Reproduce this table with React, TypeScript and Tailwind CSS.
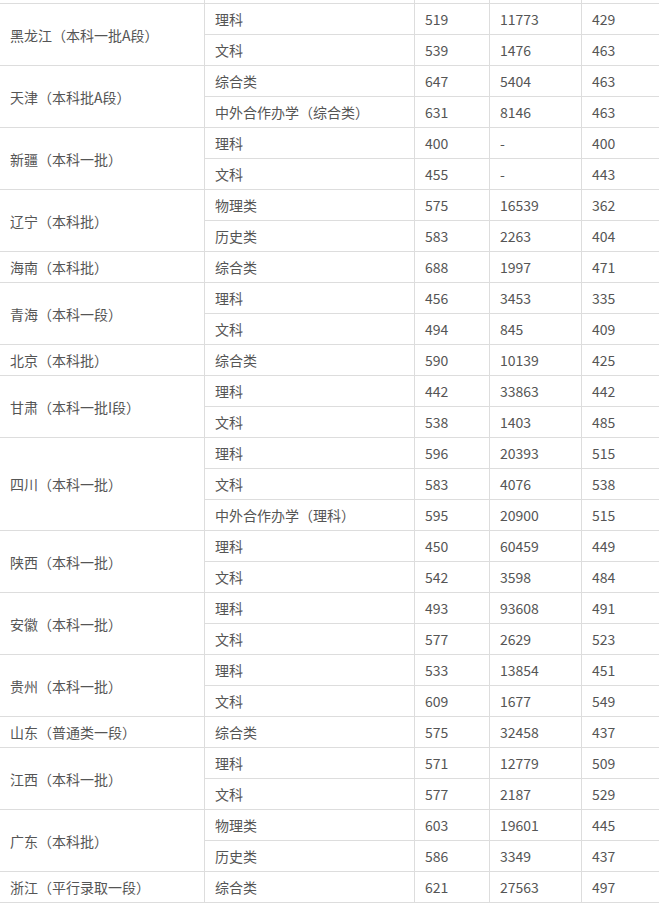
const groups: [string, [string, string, string, string][]][] = [
  ["黑龙江（本科一批A段）", [["理科", "519", "11773", "429"], ["文科", "539", "1476", "463"]]],
  ["天津（本科批A段）", [["综合类", "647", "5404", "463"], ["中外合作办学（综合类）", "631", "8146", "463"]]],
  ["新疆（本科一批）", [["理科", "400", "-", "400"], ["文科", "455", "-", "443"]]],
  ["辽宁（本科批）", [["物理类", "575", "16539", "362"], ["历史类", "583", "2263", "404"]]],
  ["海南（本科批）", [["综合类", "688", "1997", "471"]]],
  ["青海（本科一段）", [["理科", "456", "3453", "335"], ["文科", "494", "845", "409"]]],
  ["北京（本科批）", [["综合类", "590", "10139", "425"]]],
  ["甘肃（本科一批I段）", [["理科", "442", "33863", "442"], ["文科", "538", "1403", "485"]]],
  ["四川（本科一批）", [["理科", "596", "20393", "515"], ["文科", "583", "4076", "538"], ["中外合作办学（理科）", "595", "20900", "515"]]],
  ["陕西（本科一批）", [["理科", "450", "60459", "449"], ["文科", "542", "3598", "484"]]],
  ["安徽（本科一批）", [["理科", "493", "93608", "491"], ["文科", "577", "2629", "523"]]],
  ["贵州（本科一批）", [["理科", "533", "13854", "451"], ["文科", "609", "1677", "549"]]],
  ["山东（普通类一段）", [["综合类", "575", "32458", "437"]]],
  ["江西（本科一批）", [["理科", "571", "12779", "509"], ["文科", "577", "2187", "529"]]],
  ["广东（本科批）", [["物理类", "603", "19601", "445"], ["历史类", "586", "3349", "437"]]],
  ["浙江（平行录取一段）", [["综合类", "621", "27563", "497"]]],
];

const cell = "border border-[#ddd] px-[10px] py-0 align-middle text-left font-normal whitespace-nowrap";

export default function App() {
  return (
    <div className="w-[659px] h-[904px] overflow-hidden bg-white">
      <table
        className="ml-[-1px] mt-[-28px] border-collapse table-fixed w-[700px] text-[14px] leading-[20px] text-[#555]"
        style={{ fontFamily: '"Noto Sans CJK SC", "Noto Sans", sans-serif' }}
      >
        <colgroup>
          <col className="w-[205px]" />
          <col className="w-[210px]" />
          <col className="w-[75px]" />
          <col className="w-[92px]" />
          <col className="w-[118px]" />
        </colgroup>
        <tbody>
          <tr className="h-[31px]">
            <td className={cell}></td>
            <td className={cell}></td>
            <td className={cell}></td>
            <td className={cell}></td>
            <td className={cell}></td>
          </tr>
          {groups.map(([prov, rows]) =>
            rows.map((r, i) => (
              <tr key={prov + i} className="h-[31px]">
                {i === 0 && (
                  <td rowSpan={rows.length} className={cell}>
                    {prov}
                  </td>
                )}
                <td className={cell}>{r[0]}</td>
                <td className={cell}>{r[1]}</td>
                <td className={cell}>{r[2]}</td>
                <td className={cell}>{r[3]}</td>
              </tr>
            ))
          )}
        </tbody>
      </table>
    </div>
  );
}
